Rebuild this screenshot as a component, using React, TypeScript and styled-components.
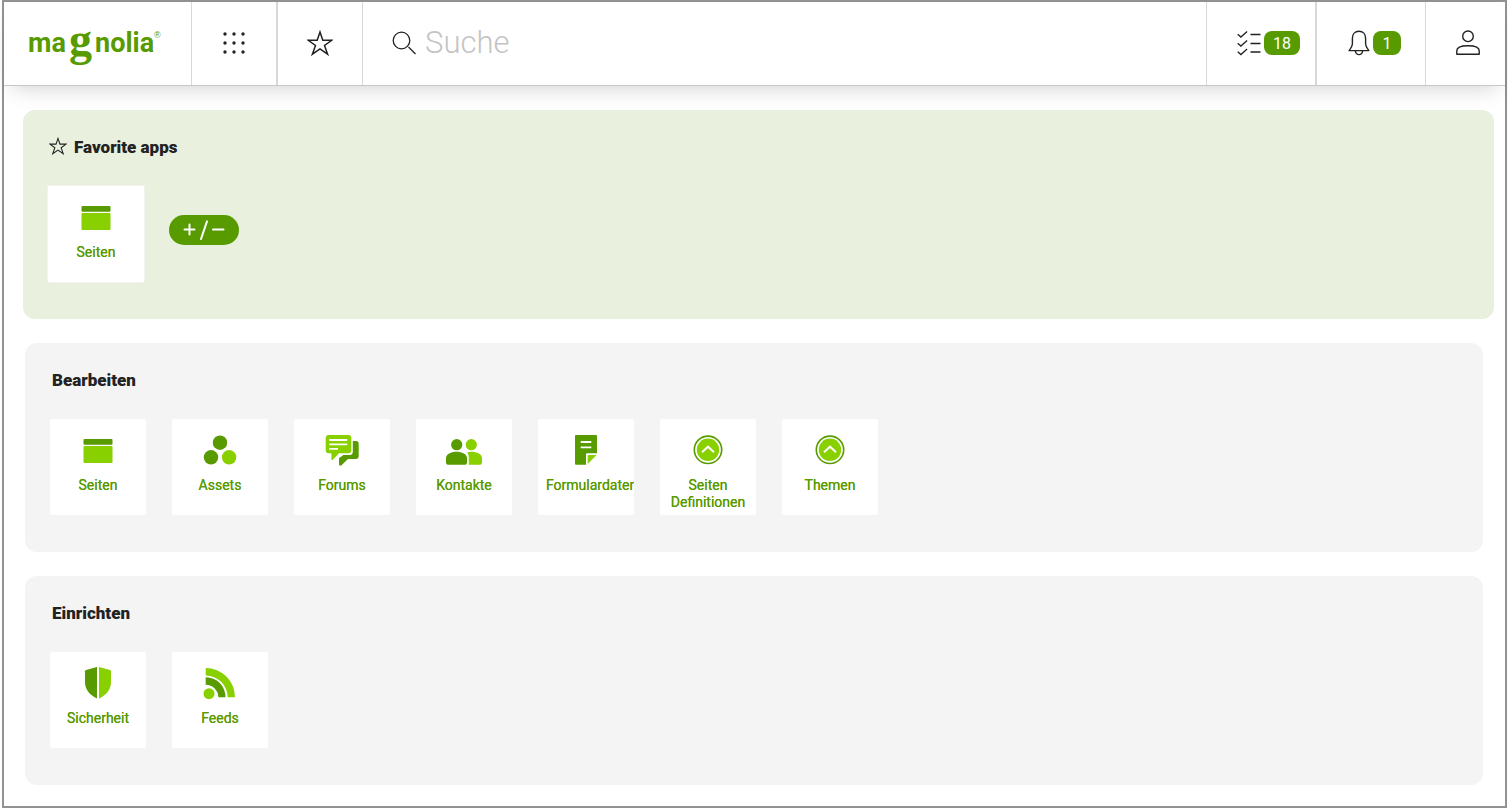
import React from "react";
import styled, { createGlobalStyle } from "styled-components";

const dark = "#579b00";
const light = "#88d000";
const ink = "#222";

const GlobalStyle = createGlobalStyle`
  *, *::before, *::after { box-sizing: border-box; }
  body {
    margin: 0;
    background: #fff;
    color: ${ink};
    font-family: Roboto, "Liberation Sans", sans-serif;
  }
  button { font: inherit; color: inherit; cursor: pointer; }
  svg { display: block; flex: none; }
`;

const Shell = styled.div`
  min-height: calc(100vh - 2px);
  margin: 0 1px 2px 2px;
  border: 2px solid #929292;
`;

const TopBar = styled.header`
  display: flex;
  height: 84px;
  background: #fff;
  border-bottom: 1px solid #c6c8c6;
  box-shadow: 0 10px 20px -8px rgba(0, 0, 0, 0.18);
`;

const Brand = styled.a`
  display: flex;
  align-items: center;
  width: 187px;
  padding-left: 24px;
`;

const BarButton = styled.button<{ $width: number; $rule?: number; $start?: boolean }>`
  display: flex;
  align-items: center;
  justify-content: ${(p) => (p.$start ? "flex-start" : "center")};
  gap: 3px;
  flex: none;
  width: ${(p) => p.$width}px;
  padding: 0 0 1px ${(p) => (p.$start ? 30 : 0)}px;
  background: none;
  border: 0 solid #d8d8d8;
  border-left-width: ${(p) => p.$rule ?? 1}px;
`;

const SearchBox = styled.label`
  display: flex;
  align-items: center;
  gap: 9px;
  flex: 1;
  min-width: 0;
  padding: 0 0 1px 29px;
  border-left: 1px solid #d8d8d8;
`;

const SearchInput = styled.input`
  flex: 1;
  min-width: 0;
  height: 48px;
  padding: 0;
  border: 0;
  outline: 0;
  background: none;
  color: ${ink};
  font: 300 31px/48px Roboto, "Liberation Sans", sans-serif;
  &::placeholder { color: #c4c4c4; opacity: 1; }
`;

const Badge = styled.span`
  min-width: 28px;
  height: 24px;
  padding: 0 9px;
  border-radius: 8px;
  background: ${dark};
  color: #fff;
  font-size: 16px;
  line-height: 25px;
`;

const Main = styled.main`
  display: flex;
  flex-direction: column;
  gap: 24px;
  padding: 24px 22px 21px 21px;
`;

const Group = styled.section<{ $favorite?: boolean }>`
  min-height: 209px;
  margin: ${(p) => (p.$favorite ? "0 -11px 0 -2px" : "0")};
  padding: 27px 25px 36px;
  padding-left: ${(p) => (p.$favorite ? 24 : 25)}px;
  border-radius: 12px;
  background: ${(p) => (p.$favorite ? "#e9f0de" : "#f4f4f4")};
`;

const GroupTitle = styled.h2<{ $favorite?: boolean }>`
  display: flex;
  align-items: center;
  gap: 7px;
  margin: 0 0 ${(p) => (p.$favorite ? 28 : 29)}px;
  padding-left: 2px;
  font-size: 17px;
  font-weight: 900;
  line-height: 20px;

  svg { margin-bottom: 2px; }
`;

const TileRow = styled.div`
  display: flex;
  flex-wrap: wrap;
  align-items: center;
  gap: 25px 26px;
`;

const Tile = styled.button<{ $outlined?: boolean }>`
  display: flex;
  flex-direction: column;
  align-items: center;
  gap: 9px;
  width: ${(p) => (p.$outlined ? 98 : 96)}px;
  height: ${(p) => (p.$outlined ? 98 : 96)}px;
  padding: 13px 8px 0;
  border: ${(p) => (p.$outlined ? "1px solid #f1f4ec" : "0")};
  border-radius: 2px;
  background: #fff;
  overflow: hidden;
`;

const TileLabel = styled.span`
  max-width: 100%;
  color: ${dark};
  font-size: 14px;
  line-height: 17px;
  text-align: center;
  text-shadow: 0 0 ${dark};
`;

const EditButton = styled.button`
  display: flex;
  align-items: center;
  justify-content: center;
  width: 70px;
  height: 30px;
  margin: 0 0 8px -2px;
  padding: 0;
  border: 0;
  border-radius: 15px;
  background: ${dark};
`;

const Logo = () => (
  <svg width="140" height="56" viewBox="0 -4 140 56" role="img" aria-label="magnolia" fill={dark}>
    <g fontFamily='Roboto, "Liberation Sans", sans-serif' fontWeight="700" fontSize="27">
      <text x="0" y="32">ma</text>
      <text x="67" y="32">nolia</text>
    </g>
    <text x="41" y="35" fontFamily='"Liberation Serif", serif' fontWeight="700" fontSize="46">g</text>
    <text x="126" y="18" fontFamily='"Liberation Sans", sans-serif' fontSize="9">®</text>
  </svg>
);

const DotsIcon = () => (
  <svg width="24" height="24" viewBox="0 0 24 24" fill={ink}>
    {[3, 12, 21].map((y) => [3, 12, 21].map((x) => <circle key={`${x}-${y}`} cx={x} cy={y} r="1.7" />))}
  </svg>
);

const StarIcon = ({ size, stroke }: { size: number; stroke: number }) => (
  <svg width={size} height={size} viewBox="0 0 26 26" fill="none" stroke={ink} strokeWidth={stroke}>
    <path d="M13 2l2.8 8.3h8.9l-7.2 5.2 3.1 8.7-7.6-5.4-7.6 5.4 3.1-8.7L1.3 10.3h8.9z" />
  </svg>
);

const SearchIcon = () => (
  <svg width="24" height="24" viewBox="0 0 24 24" fill="none" stroke={ink} strokeWidth="1.3">
    <circle cx="9.5" cy="9.5" r="8.3" />
    <path d="M16.5 16l7 7" />
  </svg>
);

const TasksIcon = () => (
  <svg width="24" height="26" viewBox="0 0 24 26" fill="none" stroke={ink} strokeWidth="1.3">
    {[0, 9, 17.5].map((y) => (
      <path key={y} d={`M.7 ${y + 4.2}l3.2 2.9 6.2-5.6M13.5 ${y + 4.5}H23.5`} />
    ))}
  </svg>
);

const BellIcon = () => (
  <svg width="23" height="26" viewBox="-1 0 23 26" fill="none" stroke={ink} strokeWidth="1.4" strokeLinejoin="round">
    <path d="M11 1.3c-4 0-6.6 3-6.6 7v5.2c0 2.6-1.3 4.5-3.3 7.1h19.8c-2-2.6-3.3-4.5-3.3-7.1V8.3c0-4-2.6-7-6.6-7z" />
    <path d="M7.4 20.8a3.6 3.8 0 0 0 7.2 0" />
  </svg>
);

const UserIcon = () => (
  <svg width="24" height="26" viewBox="0 0 24 26" fill="none" stroke={ink} strokeWidth="1.4" strokeLinejoin="round">
    <circle cx="12" cy="6.3" r="5.3" />
    <path d="M.8 24.3v-3.6c0-3.4 4.8-5 11.2-5s11.2 1.6 11.2 5v3.6z" />
  </svg>
);

const PlusMinusIcon = () => (
  <svg width="44" height="22" viewBox="0 0 44 22" fill="none" stroke="#fff" strokeWidth="2" strokeLinecap="round">
    <path d="M2.5 10.5h10M7.5 5.5v10M19 20l6-17.6M31 10.5h10.5" />
  </svg>
);

const icons = {
  pages: (
    <>
      <rect x="3.5" y="7" width="29" height="5.7" rx="1" fill={dark} />
      <rect x="3.5" y="14" width="29" height="17" rx="1" fill={light} />
    </>
  ),
  assets: (
    <>
      <circle cx="18" cy="10.7" r="7.2" fill={dark} />
      <circle cx="9" cy="25.3" r="7.2" fill={dark} />
      <circle cx="27.1" cy="25.3" r="7.2" fill={light} />
    </>
  ),
  forums: (
    <>
      <path fill={light} d="M4.7 3h19.6a3 3 0 0 1 3 3v12.3a3 3 0 0 1-3 3h-9.4l-6 6.4c-.7.7-1.5.4-1.5-.6v-5.8H4.7a3 3 0 0 1-3-3V6a3 3 0 0 1 3-3z" />
      <path stroke="#fff" strokeWidth="1.8" d="M5.3 8h18M5.3 12.4h18M5.3 16.8H14" />
      <path fill={dark} d="M28.8 9H32a2.7 2.7 0 0 1 2.7 2.7V24a3 3 0 0 1-3 3H24l-6.5 6.3c-.9.8-2.5.3-2.5-1v-6.1l4.3-3.3h6.5a3.2 3.2 0 0 0 3-3z" />
    </>
  ),
  contacts: (
    <>
      <circle cx="10.7" cy="12.7" r="5.6" fill={dark} />
      <circle cx="25.3" cy="12.7" r="5.6" fill={light} />
      <path fill={dark} d="M0 26c0-4 5-6.3 10.5-6.3S21 22 21 26v4.7a2 2 0 0 1-2 2H2a2 2 0 0 1-2-2z" />
      <path fill={light} d="M21.2 20.3c1.3-.4 2.8-.6 4.3-.6C31 19.7 36 22 36 26v4.7a2 2 0 0 1-2 2H22.8V26c0-2.4-.5-4.2-1.6-5.7z" />
    </>
  ),
  form: (
    <>
      <path fill={dark} d="M8 3h20a1 1 0 0 1 1 1v17.3H19a1 1 0 0 0-1 1v10.4H8a1 1 0 0 1-1-1V4a1 1 0 0 1 1-1z" />
      <path stroke="#fff" strokeWidth="1.8" d="M12.7 10h10.6M12.7 15.4h10.6" />
      <path fill={light} d="M20.5 23h8.1l-8.9 9v-8.2z" />
    </>
  ),
  circle: (
    <>
      <circle cx="18" cy="17.8" r="13.7" fill="none" stroke={dark} strokeWidth="1.6" />
      <circle cx="18" cy="17.8" r="11.2" fill={light} />
      <path fill="none" stroke="#fff" strokeWidth="2" d="M12 20.3l6-5.6 6 5.6" />
    </>
  ),
  shield: (
    <>
      <path fill={dark} d="M17 2v31.6C9 29.5 5 24 5 17V6.2c0-.7.4-1.1 1-1.3z" />
      <path fill={light} d="M19 2v31.6c8-4.1 12-9.6 12-16.6V6.2c0-.7-.4-1.1-1-1.3z" />
    </>
  ),
  feeds: (
    <>
      <path fill={light} d="M3.7 3A29.3 29.3 0 0 1 33 32.3h-7.3A22 22 0 0 0 3.7 10.5z" />
      <path fill={dark} d="M3.7 12.2a19.8 19.8 0 0 1 19.8 20.1h-7.1a12.6 12.6 0 0 0-12.7-12.5z" />
      <circle cx="7" cy="28.7" r="5.5" fill={light} />
    </>
  ),
};

type App = { icon: keyof typeof icons; label: string };

const AppTile = ({ icon, label, outlined }: App & { outlined?: boolean }) => (
  <Tile type="button" $outlined={outlined}>
    <svg width="36" height="36" viewBox="0 0 36 36" aria-hidden="true">
      {icons[icon]}
    </svg>
    <TileLabel>{label}</TileLabel>
  </Tile>
);

const groups: { title: string; apps: App[] }[] = [
  {
    title: "Bearbeiten",
    apps: [
      { icon: "pages", label: "Seiten" },
      { icon: "assets", label: "Assets" },
      { icon: "forums", label: "Forums" },
      { icon: "contacts", label: "Kontakte" },
      { icon: "form", label: "Formulardaten" },
      { icon: "circle", label: "Seiten Definitionen" },
      { icon: "circle", label: "Themen" },
    ],
  },
  {
    title: "Einrichten",
    apps: [
      { icon: "shield", label: "Sicherheit" },
      { icon: "feeds", label: "Feeds" },
    ],
  },
];

export default function App() {
  return (
    <>
      <GlobalStyle />
      <Shell>
        <TopBar>
          <Brand href="#"><Logo /></Brand>
          <BarButton type="button" aria-label="Apps" $width={85}><DotsIcon /></BarButton>
          <BarButton type="button" aria-label="Favoriten" $width={86} $rule={2}><StarIcon size={26} stroke={1.5} /></BarButton>
          <SearchBox>
            <SearchIcon />
            <SearchInput type="search" placeholder="Suche" aria-label="Suche" />
          </SearchBox>
          <BarButton type="button" aria-label="Aufgaben" $width={109} $start>
            <TasksIcon />
            <Badge>18</Badge>
          </BarButton>
          <BarButton type="button" aria-label="Benachrichtigungen" $width={110} $rule={2} $start>
            <BellIcon />
            <Badge>1</Badge>
          </BarButton>
          <BarButton type="button" aria-label="Benutzer" $width={80} $start><UserIcon /></BarButton>
        </TopBar>
        <Main>
          <Group $favorite>
            <GroupTitle $favorite>
              <StarIcon size={18} stroke={1.5} />
              Favorite apps
            </GroupTitle>
            <TileRow>
              <AppTile icon="pages" label="Seiten" outlined />
              <EditButton type="button" aria-label="Favoriten bearbeiten"><PlusMinusIcon /></EditButton>
            </TileRow>
          </Group>
          {groups.map((group) => (
            <Group key={group.title}>
              <GroupTitle>{group.title}</GroupTitle>
              <TileRow>
                {group.apps.map((app) => <AppTile key={app.label} {...app} />)}
              </TileRow>
            </Group>
          ))}
        </Main>
      </Shell>
    </>
  );
}
